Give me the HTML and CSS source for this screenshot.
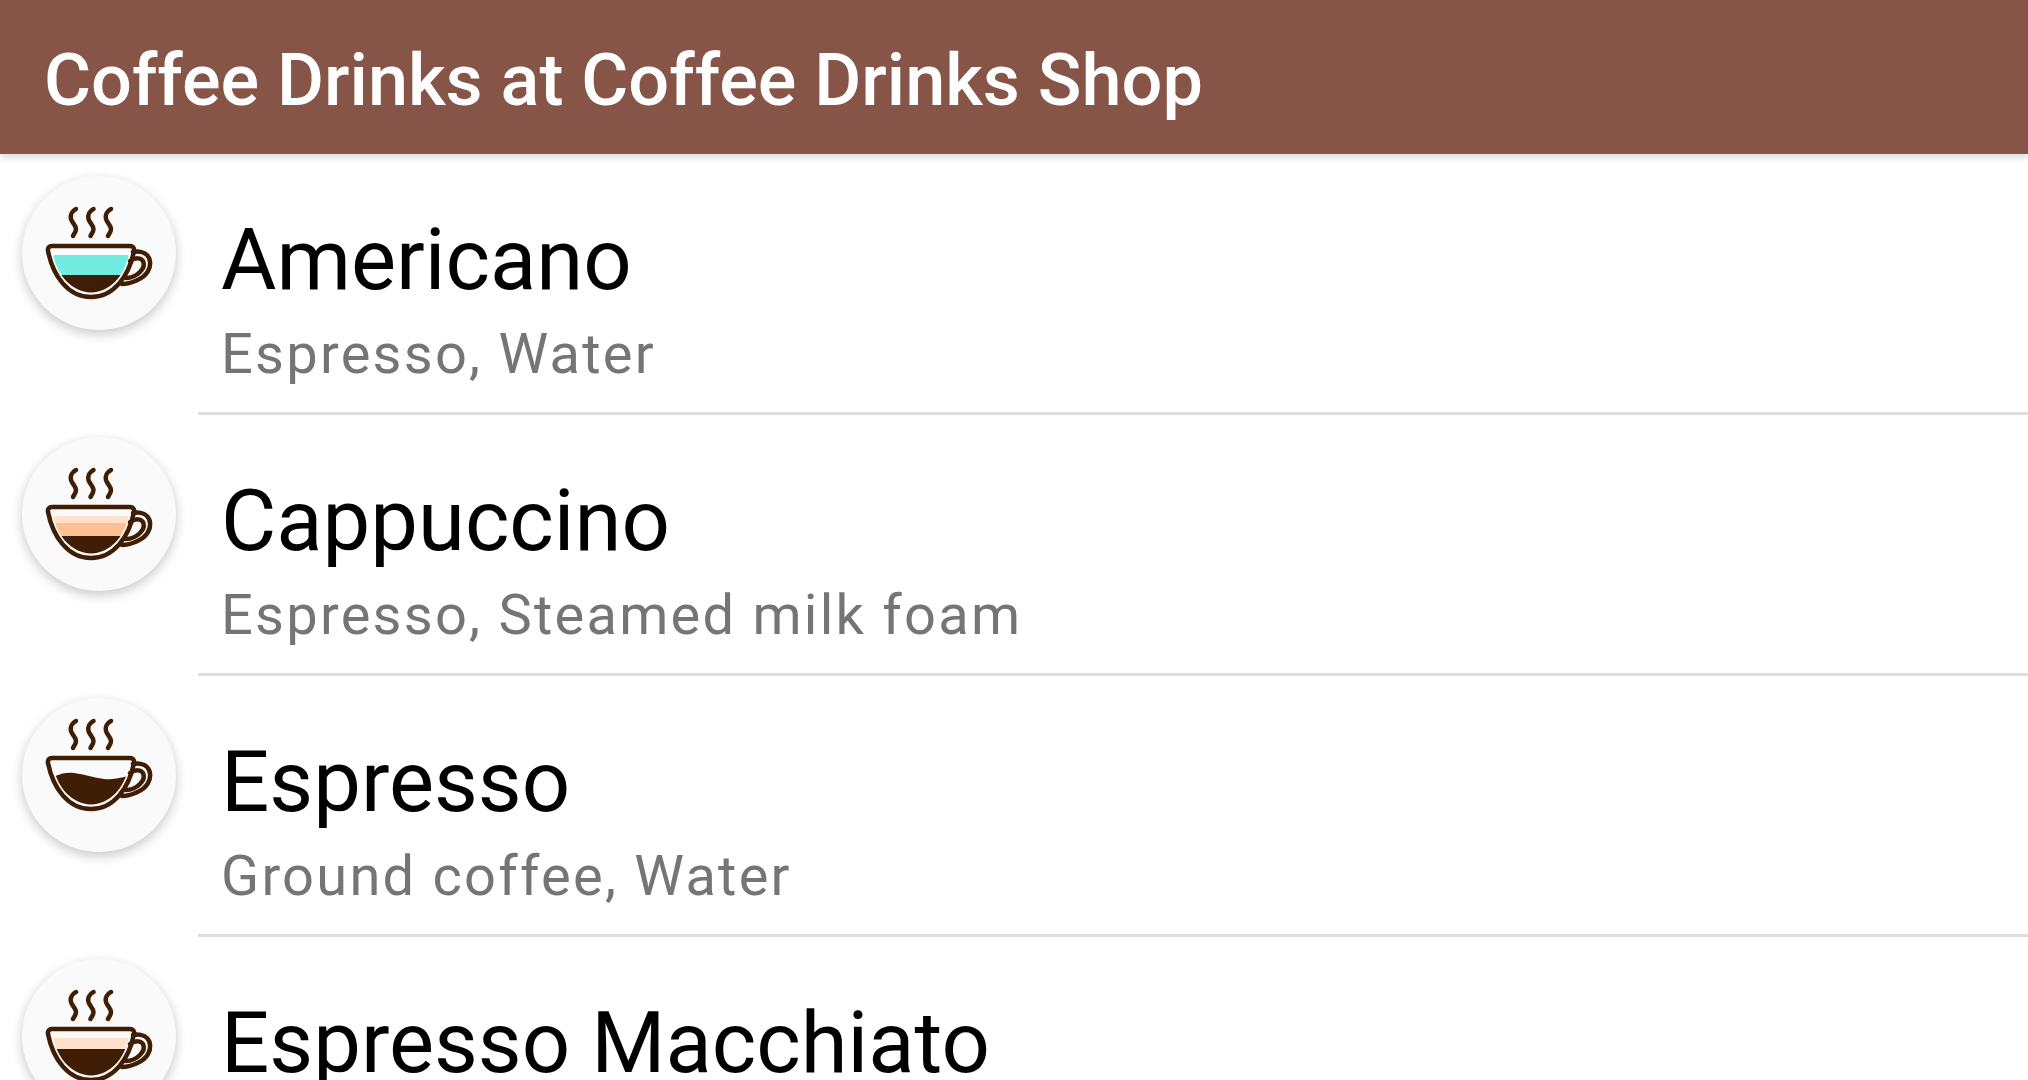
FILE: index.html
```html
<!DOCTYPE html>
<html lang="en">
<head>
  <meta charset="UTF-8">
  <meta name="viewport" content="width=device-width, initial-scale=1.0">
  <title>Coffee Drinks at Coffee Drinks Shop</title>
  <link rel="stylesheet" href="styles.css">
</head>
<body>
  <header class="toolbar">
    <h1 class="toolbar-title">Coffee Drinks at Coffee Drinks Shop</h1>
  </header>

  <!-- shared cup parts, all in the 154x154 space of the avatar -->
  <svg class="cup-defs" aria-hidden="true">
    <defs>
      <clipPath id="cup-inside">
        <path d="M33 79H105C106 79 106.500 79.800 106.300 80.800C102 99 89 116 69 116.500C49 116 36 99 31.700 80.800C31.500 79.800 32 79 33 79Z"/>
      </clipPath>
      <g id="cup-outline" fill="none" stroke="#3f1e05" stroke-width="4.500" stroke-linecap="round" stroke-linejoin="round">
        <path d="M54 33C50 35 48 39 49 43C50 47 54 49 54 53C54 56 52 58 51 60"/>
        <path d="M71.500 33C67.500 35 65.500 39 66.500 43C67.500 47 71.500 49 71.500 53C71.500 56 69.500 58 68.500 60"/>
        <path d="M89 33C85 35 83 39 84 43C85 47 89 49 89 53C89 56 87 58 86 60"/>
        <path d="M30 70H108C111 70 112.500 72 112 75C107 100 92 121 69 121C46 121 31 100 26 75C25.500 72 27 70 30 70Z"/>
        <path d="M111 76C116 75 122 76 125 79C129 83 129 90 126 95C122 103 108 108 100 108"/>
        <path d="M108 85C114 81 119 82 121 85C123 89 121 93 118 96C114 100 108 102 104 102"/>
      </g>
    </defs>
  </svg>

  <main class="drink-list">
    <div class="drink-row">
      <div class="avatar">
        <svg class="cup" viewBox="0 0 154 154">
          <g clip-path="url(#cup-inside)">
            <rect x="25" y="79" width="90" height="20" fill="#72ebe1"/>
            <rect x="25" y="99" width="90" height="20" fill="#3f1e05"/>
          </g>
          <use href="#cup-outline"/>
        </svg>
      </div>
      <div class="drink-text">
        <div class="drink-name">Americano</div>
        <div class="drink-parts">Espresso, Water</div>
      </div>
    </div>

    <div class="drink-row">
      <div class="avatar">
        <svg class="cup" viewBox="0 0 154 154">
          <g clip-path="url(#cup-inside)">
            <rect x="25" y="76" width="90" height="10" fill="#ffe0cc"/>
            <rect x="25" y="86" width="90" height="13" fill="#ffc093"/>
            <rect x="25" y="99" width="90" height="20" fill="#3f1e05"/>
          </g>
          <use href="#cup-outline"/>
        </svg>
      </div>
      <div class="drink-text">
        <div class="drink-name">Cappuccino</div>
        <div class="drink-parts">Espresso, Steamed milk foam</div>
      </div>
    </div>

    <div class="drink-row">
      <div class="avatar">
        <svg class="cup" viewBox="0 10 154 154">
          <g clip-path="url(#cup-inside)">
            <path d="M25 93C34 86 44 84 52 85C62 86 72 90 82 91C90 92 98 90 110 87V120H25Z" fill="#3f1e05"/>
          </g>
          <use href="#cup-outline"/>
        </svg>
      </div>
      <div class="drink-text">
        <div class="drink-name">Espresso</div>
        <div class="drink-parts">Ground coffee, Water</div>
      </div>
    </div>

    <div class="drink-row">
      <div class="avatar">
        <svg class="cup" viewBox="0 0 154 154">
          <g clip-path="url(#cup-inside)">
            <rect x="25" y="74" width="90" height="16" fill="#ffe0cc"/>
            <rect x="25" y="90" width="90" height="30" fill="#3f1e05"/>
          </g>
          <use href="#cup-outline"/>
        </svg>
      </div>
      <div class="drink-text">
        <div class="drink-name">Espresso Macchiato</div>
      </div>
    </div>
  </main>
</body>
</html>
```

FILE: styles.css
```css
html, body {
  height: 100%;
}

body {
  margin: 0;
  overflow: hidden;
  background-color: #fff;
  font-family: Roboto, sans-serif;
}

.toolbar {
  position: relative;
  display: flex;
  align-items: center;
  box-sizing: border-box;
  height: 154px;
  padding: 6px 0 0 44px;
  background-color: #865547;
  box-shadow: 0 3px 8px rgba(0, 0, 0, 0.16);
}

.toolbar-title {
  margin: 0;
  color: #fff;
  font-size: 72.050px;
  font-weight: 500;
}

.cup-defs {
  display: block;
  width: 0;
  height: 0;
}

.drink-row {
  display: flex;
  height: 261px;
  box-sizing: border-box;
  padding-left: 22px;
}

.avatar {
  flex: none;
  width: 154px;
  height: 154px;
  margin-top: 22px;
  border-radius: 50%;
  background-color: #fafafa;
  box-shadow: 0 4px 12px rgba(0, 0, 0, 0.22);
}

.cup {
  display: block;
  width: 154px;
  height: 154px;
}

.drink-text {
  flex: 1;
  margin-left: 22px;
  padding-left: 23px;
  border-bottom: 3px solid #dedede;
}

.drink-name {
  margin-top: 54px;
  color: #000;
  font-size: 85px;
  line-height: 104px;
}

.drink-parts {
  margin-top: 10px;
  color: #757575;
  font-size: 56px;
  line-height: 64px;
  letter-spacing: 2.250px;
}
```
